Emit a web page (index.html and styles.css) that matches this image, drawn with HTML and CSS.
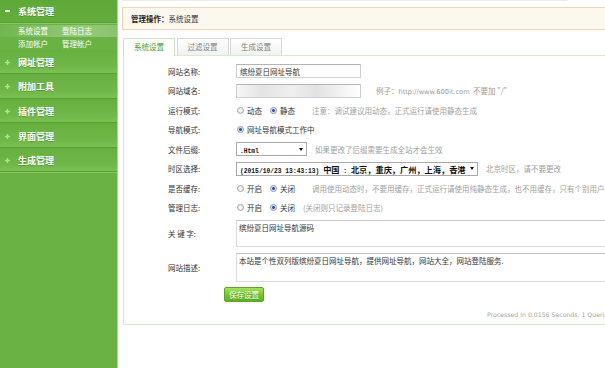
FILE: index.html
```html
<!DOCTYPE html>
<html lang="zh-CN">
<head>
    <meta charset="UTF-8">
    <title>系统设置</title>
    <link rel="stylesheet" href="styles.css">
</head>
<body>
    <aside class="sidebar">
        <div class="menu-head open"><span class="minus"></span>系统管理</div>
        <ul class="submenu">
            <li class="current"><a>系统设置</a><a>登陆日志</a></li>
            <li><a>添加帐户</a><a>管理帐户</a></li>
        </ul>
        <div class="menu-head"><svg class="plus" viewBox="0 0 6 6"><path d="M3 0.8V5.2M0.8 3H5.2"/></svg>网址管理</div>
        <div class="menu-head"><svg class="plus" viewBox="0 0 6 6"><path d="M3 0.8V5.2M0.8 3H5.2"/></svg>附加工具</div>
        <div class="menu-head"><svg class="plus" viewBox="0 0 6 6"><path d="M3 0.8V5.2M0.8 3H5.2"/></svg>插件管理</div>
        <div class="menu-head"><svg class="plus" viewBox="0 0 6 6"><path d="M3 0.8V5.2M0.8 3H5.2"/></svg>界面管理</div>
        <div class="menu-head"><svg class="plus" viewBox="0 0 6 6"><path d="M3 0.8V5.2M0.8 3H5.2"/></svg>生成管理</div>
    </aside>

    <main class="main">
        <div class="topline"></div>
        <div class="crumb"><b>管理操作：</b>系统设置</div>

        <ul class="tabs">
            <li class="active">系统设置</li>
            <li>过滤设置</li>
            <li>生成设置</li>
        </ul>

        <div class="panel">
            <form class="setting">
                <div class="row">
                    <span class="lbl">网站名称:</span>
                    <input class="text" type="text" value="缤纷夏日网址导航">
                </div>
                <div class="row">
                    <span class="lbl">网站域名:</span>
                    <input class="text blurred" type="text" value="">
                    <span class="tip tip-url">例子：<em>http://www.600it.com</em>&nbsp;&nbsp;不要加 "/"</span>
                </div>
                <div class="row">
                    <span class="lbl">运行模式:</span>
                    <label class="opt"><input class="rd" type="radio" name="mode">动态</label>
                    <label class="opt"><input class="rd" type="radio" name="mode" checked>静态</label>
                    <span class="tip">注意：调试建议用动态，正式运行请使用静态生成</span>
                </div>
                <div class="row">
                    <span class="lbl">导航模式:</span>
                    <label class="opt"><input class="rd" type="radio" name="nav" checked>网址导航模式工作中</label>
                </div>
                <div class="row">
                    <span class="lbl">文件后缀:</span>
                    <span class="sel sel-ext"><span class="val"><span class="en">.Html</span></span></span>
                    <span class="tip tip-near">如果更改了后缀需要生成全站才会生效</span>
                </div>
                <div class="row">
                    <span class="lbl">时区选择:</span>
                    <span class="sel sel-zone"><span class="val"><span class="en">(2015/10/23 13:43:13) </span>中国<span class="en"> : </span>北京，重庆，广州，上海，香港</span></span>
                    <span class="tip tip-near">北京时区，请不要更改</span>
                </div>
                <div class="row">
                    <span class="lbl">是否缓存:</span>
                    <label class="opt"><input class="rd" type="radio" name="cache">开启</label>
                    <label class="opt"><input class="rd" type="radio" name="cache" checked>关闭</label>
                    <span class="tip">调用使用动态时，不要用缓存，正式运行请使用纯静态生成，也不用缓存，只有个别用户才需要开启缓存</span>
                </div>
                <div class="row">
                    <span class="lbl">管理日志:</span>
                    <label class="opt"><input class="rd" type="radio" name="log">开启</label>
                    <label class="opt"><input class="rd" type="radio" name="log" checked>关闭</label><span class="tip tip-paren">(关闭则只记录登陆日志)</span>
                </div>
                <div class="row tall kw">
                    <span class="lbl">关 键 字:</span>
                    <textarea class="area">缤纷夏日网址导航源码</textarea>
                </div>
                <div class="row tall desc">
                    <span class="lbl">网站描述:</span>
                    <textarea class="area">本站是个性双列版缤纷夏日网址导航，提供网址导航，网站大全，网站登陆服务.</textarea>
                </div>
                <button class="btn" type="button">保存设置</button>
            </form>
            <div class="runtime">Processed In 0.0156 Seconds, 1 Queries.</div>
        </div>
    </main>
</body>
</html>
```

FILE: styles.css
```css
html, body {
    margin: 0;
    padding: 0;
}

body {
    width: 605px;
    height: 368px;
    overflow: hidden;
    display: flex;
    background: #fff;
    font-family: "Noto Sans CJK SC", "Liberation Sans", sans-serif;
    font-size: 7.5px;
    color: #333;
}

/* left menu */
.sidebar {
    flex: none;
    width: 117px;
    height: 368px;
    background: #69b243;
    border-right: 1px solid #a8d88b;
}

.menu-head {
    display: flex;
    align-items: center;
    height: 24.6px;
    box-sizing: border-box;
    padding: 2px 0 0 5px;
    color: #fff;
    font-size: 9px;
    font-weight: bold;
    text-shadow: 0 1px 0 rgba(40, 90, 20, 0.35);
    background: linear-gradient(#67b040, #6fb748 70%, #7bc053);
    border-bottom: 1px solid #58a033;
    box-shadow: 0 1px 0 #88c966;
}

.menu-head.open {
    height: 23px;
    padding-top: 0;
    background: linear-gradient(#5fa939, #64ad3d);
}

.minus {
    width: 5px;
    height: 1.6px;
    background: #fff;
    margin-right: 8px;
}

.plus {
    width: 5px;
    height: 5px;
    margin-right: 8px;
    fill: none;
    stroke: #b4e294;
    stroke-width: 1.8;
    stroke-linecap: round;
}

.submenu {
    list-style: none;
    margin: 0;
    padding: 1.5px 0 0;
    height: 26.5px;
    box-sizing: border-box;
}

.submenu li {
    display: flex;
    align-items: center;
    height: 12.5px;
    padding-left: 18px;
}

.submenu li.current {
    background: linear-gradient(to right, rgba(255, 255, 255, 0.06), rgba(255, 255, 255, 0.3) 70%, rgba(255, 255, 255, 0.22));
}

.submenu a {
    color: #fff;
    width: 44px;
}

/* content */
.main {
    flex: none;
    width: 560px;
    padding-left: 4px;
}

.topline {
    width: 445px;
    height: 1px;
    background: #ececec;
}

.crumb {
    display: flex;
    align-items: center;
    margin-top: 6px;
    height: 23px;
    box-sizing: border-box;
    padding-left: 8px;
    background: #fcf7ef;
    border: 1px solid #f3d4b7;
    border-right: none;
}

.crumb b {
    color: #222;
}

.tabs {
    display: flex;
    align-items: flex-start;
    list-style: none;
    margin: 8px 0 0 1px;
    padding: 0;
    height: 17px;
}

.tabs li {
    width: 52px;
    height: 17px;
    box-sizing: border-box;
    margin-right: 1.5px;
    border: 1px solid #d8d8d8;
    border-bottom: none;
    background: linear-gradient(#fff, #f1f1f1);
    color: #808080;
    text-align: center;
    line-height: 16px;
}

.tabs li.active {
    position: relative;
    z-index: 1;
    height: 18px;
    border-color: #cfe6c6;
    background: #fff;
    color: #3f9b2a;
}

.panel {
    margin-left: 1px;
    height: 270px;
    box-sizing: border-box;
    padding-top: 5.5px;
    border: 1px solid #d6ecce;
    border-right: none;
}

.row {
    display: flex;
    align-items: center;
    height: 19.5px;
    white-space: nowrap;
}

.lbl {
    flex: none;
    width: 112px;
    box-sizing: border-box;
    padding-left: 44px;
}

.text {
    width: 125px;
    height: 14px;
    box-sizing: border-box;
    margin: 0;
    padding: 0 3px;
    border: 1px solid #cfcfcf;
    border-top-color: #b5b5b5;
    font: 7.5px "Noto Sans CJK SC", sans-serif;
    color: #333;
}

.blurred {
    background: linear-gradient(to right, #f6f6f6, #e4e4e4 20%, #eeeeee 45%, #e2e2e2 65%, #f7f7f7 90%, #fff);
}

.tip {
    color: #a0a0a0;
    margin-left: 10px;
}

.tip-url {
    margin-left: 15px;
    color: #999;
}

.tip-url em {
    font-style: normal;
    font-family: "DejaVu Sans", sans-serif;
    font-size: 6.6px;
}

.tip-near {
    margin-left: 8px;
}

.tip-paren {
    margin-left: 1px;
}

.opt {
    display: flex;
    align-items: center;
    margin-right: 7px;
}

.rd {
    appearance: none;
    width: 7px;
    height: 7px;
    margin: 0 3px 0 1px;
    border: 1px solid #a6a6a6;
    border-radius: 50%;
    background: radial-gradient(#fdfdfd, #dedede);
}

.rd:checked {
    border-color: #8a98ac;
    background: radial-gradient(#2b58a3 30%, #9db3d6 45%, #e6ebf2 60%);
}

.sel {
    position: relative;
    display: inline-flex;
    align-items: center;
    height: 14px;
    box-sizing: border-box;
    padding: 0 10px 0 3px;
    border: 1px solid #a9a9a9;
    background: #fff;
    overflow: hidden;
}

.sel .val {
    overflow: hidden;
    font-weight: bold;
    font-size: 8.2px;
    color: #111;
}

.sel .en {
    font-family: "Liberation Mono", monospace;
    font-size: 6.3px;
    white-space: pre;
}

.sel::after {
    content: "";
    position: absolute;
    right: 3px;
    top: 4.5px;
    border-left: 2.5px solid transparent;
    border-right: 2.5px solid transparent;
    border-top: 3px solid #111;
}

.sel-ext {
    width: 71px;
}

.sel-zone {
    width: 242px;
}

.tall {
    height: auto;
}

.kw {
    margin-top: 2.5px;
}

.desc {
    margin-top: 6px;
}

.area {
    width: 400px;
    box-sizing: border-box;
    margin: 0;
    padding: 1px 2px;
    border: 1px solid #dcdcdc;
    border-top-color: #c6c6c6;
    resize: none;
    font: 7.5px "Noto Sans CJK SC", sans-serif;
    color: #333;
}

.kw .area {
    height: 27px;
}

.desc .area {
    height: 29px;
}

.btn {
    display: block;
    margin: 5px 0 0 100px;
    width: 40px;
    height: 15px;
    padding: 0;
    border: 1px solid #5ea522;
    border-radius: 2px;
    background: linear-gradient(#a3e35e, #76c734 50%, #5eb420);
    color: #fff;
    font: 7.5px "Noto Sans CJK SC", sans-serif;
    text-shadow: 0 1px 0 rgba(50, 110, 10, 0.5);
    cursor: pointer;
}

.runtime {
    margin: 9px 0 0 363px;
    line-height: 8px;
    white-space: nowrap;
    font-family: "DejaVu Sans", sans-serif;
    font-size: 6.2px;
    color: #a5a5a5;
}
```
